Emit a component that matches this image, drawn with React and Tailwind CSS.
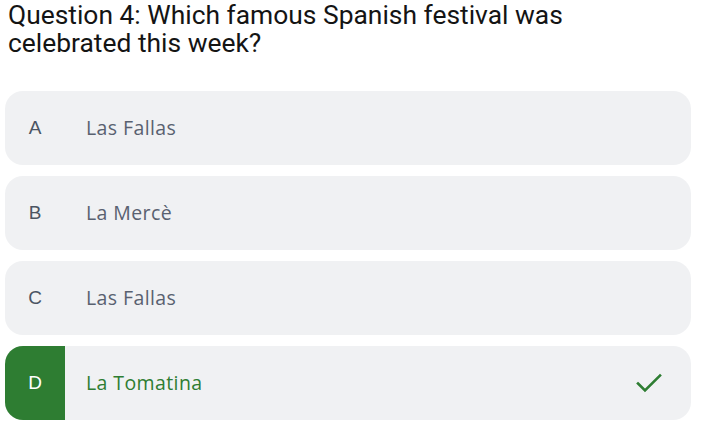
const options = [
  { key: "A", text: "Las Fallas" },
  { key: "B", text: "La Mercè" },
  { key: "C", text: "Las Fallas" },
  { key: "D", text: "La Tomatina", correct: true },
];

function Check() {
  return (
    <svg width="26" height="20" viewBox="0 0 26 20" fill="none">
      <path d="M2 10.5 L9 17.5 L24 2.5" stroke="#2e7d32" strokeWidth="2.6" strokeLinecap="square" />
    </svg>
  );
}

export default function App() {
  return (
    <div className="w-[704px] h-[434px] bg-white overflow-hidden" style={{ fontFamily: '"Open Sans", sans-serif' }}>
      <h2
        className="pl-[8px] pt-[1px] max-w-[600px] text-[26.4px] leading-[28px] text-[#141414]"
        style={{ fontFamily: '"Roboto", sans-serif' }}
      >
        Question 4: Which famous Spanish festival was celebrated this week?
      </h2>
      <div className="mt-[34px] flex flex-col gap-[11px] pl-[5px] pr-[13px]">
        {options.map((o) => (
          <div key={o.key} className="h-[74px] flex items-stretch rounded-[18px] bg-[#f0f1f3] overflow-hidden">
            <div
              className={
                "w-[60px] flex items-center justify-center text-[19px] " +
                (o.correct ? "bg-[#2e7d32] text-white" : "text-[#4b5563]")
              }
              style={{ fontFamily: '"Liberation Sans", sans-serif' }}
            >
              {o.key}
            </div>
            <div
              className={
                "flex-1 flex items-center pl-[21px] text-[19.5px] tracking-[0.4px] " +
                (o.correct ? "text-[#2e7d32]" : "text-[#596170]")
              }
            >
              {o.text}
            </div>
            {o.correct && (
              <div className="flex items-center pr-[29px]">
                <Check />
              </div>
            )}
          </div>
        ))}
      </div>
    </div>
  );
}
